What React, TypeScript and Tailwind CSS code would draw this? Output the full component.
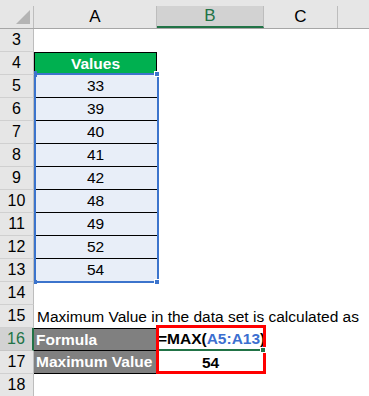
import React from "react";

const values = [33, 39, 40, 41, 42, 48, 49, 52, 54];

function RowHead({ n, active }: { n: number; active?: boolean }) {
  return (
    <div
      className={
        active
          ? "w-[34px] shrink-0 h-full flex items-center justify-center text-[16px] bg-[#d2d2d2] text-[#217346] border-b border-[#c6c6c6] border-r-2 border-r-[#217346]"
          : "w-[34px] shrink-0 h-full flex items-center justify-center text-[16px] bg-[#e6e6e6] text-black border-b border-[#d0d0d0] border-r border-r-[#bdbdbd]"
      }
    >
      {n}
    </div>
  );
}

export default function App() {
  return (
    <div
      className="relative w-[369px] h-[396px] overflow-hidden bg-white text-[15.5px] text-black"
      style={{ fontFamily: '"Liberation Sans", Arial, sans-serif' }}
    >
      {/* column headers */}
      <div className="h-[6px] bg-[#e6e6e6]" />
      <div className="flex h-[23px] bg-[#e6e6e6] border-b border-[#a6a6a6] text-[17px]">
        <div className="relative w-[34px] shrink-0 border-r border-[#bdbdbd]">
          <svg className="absolute right-[3px] bottom-[4px]" width="14" height="14" viewBox="0 0 14 14">
            <polygon points="14,0 14,14 0,14" fill="#b4b4b4" />
          </svg>
        </div>
        <div className="w-[123px] shrink-0 flex items-center justify-center border-r border-[#bdbdbd]">A</div>
        <div className="w-[107px] shrink-0 flex items-center justify-center bg-[#d2d2d2] text-[#217346] border-b-2 border-[#217346] border-r border-r-[#bdbdbd]">
          B
        </div>
        <div className="w-[74px] shrink-0 flex items-center justify-center border-r border-[#bdbdbd]">C</div>
        <div className="flex-1" />
      </div>

      {/* row 3 */}
      <div className="flex h-[23px]">
        <RowHead n={3} />
      </div>

      {/* row 4 */}
      <div className="flex h-[23px]">
        <RowHead n={4} />
        <div className="w-[123px] shrink-0 flex items-center justify-center bg-[#00b050] text-white font-bold border border-black border-b-0">
          Values
        </div>
      </div>

      {values.map((v, i) => (
        <div key={v} className="flex h-[23px]">
          <RowHead n={5 + i} />
          <div className="w-[123px] shrink-0 flex items-center justify-center bg-[#e8eef8] border-b border-black">
            {v}
          </div>
        </div>
      ))}

      <div className="flex h-[23px]">
        <RowHead n={14} />
      </div>

      <div className="flex h-[23px]">
        <RowHead n={15} />
        <div className="flex items-center pl-[3px] whitespace-nowrap">
          Maximum Value in the data set is calculated as
        </div>
      </div>

      <div className="flex h-[23px]">
        <RowHead n={16} active />
        <div className="w-[123px] shrink-0 flex items-center pl-[2px] bg-[#808080] text-white font-bold border-y border-black">
          Formula
        </div>
        <div className="w-[107px] shrink-0 flex items-center pl-[1px] font-bold border-b-2 border-[#217346] whitespace-nowrap">
          =MAX(<span className="text-[#3c6fd0]">A5:A13</span>)
        </div>
      </div>

      <div className="flex h-[23px]">
        <RowHead n={17} />
        <div className="w-[123px] shrink-0 flex items-center pl-[2px] bg-[#808080] text-white font-bold border-b border-black">
          Maximum Value
        </div>
        <div className="w-[107px] shrink-0 flex items-center justify-center font-bold">54</div>
      </div>

      <div className="flex h-[23px]">
        <RowHead n={18} />
      </div>

      {/* range highlight A5:A13 */}
      <div className="absolute left-[34px] top-[73px] w-[125px] h-[210px] border-2 border-[#3c74cc] pointer-events-none" />
      <div className="absolute left-[34px] top-[71px] w-[3px] h-[6px] bg-[#3c74cc]" />
      <div className="absolute left-[154px] top-[71px] w-[6px] h-[6px] bg-[#3c74cc] border border-white" />
      <div className="absolute left-[34px] top-[280px] w-[3px] h-[4px] bg-[#3c74cc]" />
      <div className="absolute left-[154px] top-[279px] w-[6px] h-[6px] bg-[#3c74cc] border border-white" />

      {/* red box */}
      <div className="absolute left-[156px] top-[325px] w-[110px] h-[49px] border-[3px] border-[#ff0000]" />
      {/* fill handle */}
      <div className="absolute left-[260px] top-[347px] w-[6px] h-[6px] bg-[#217346] border border-white" />
    </div>
  );
}
